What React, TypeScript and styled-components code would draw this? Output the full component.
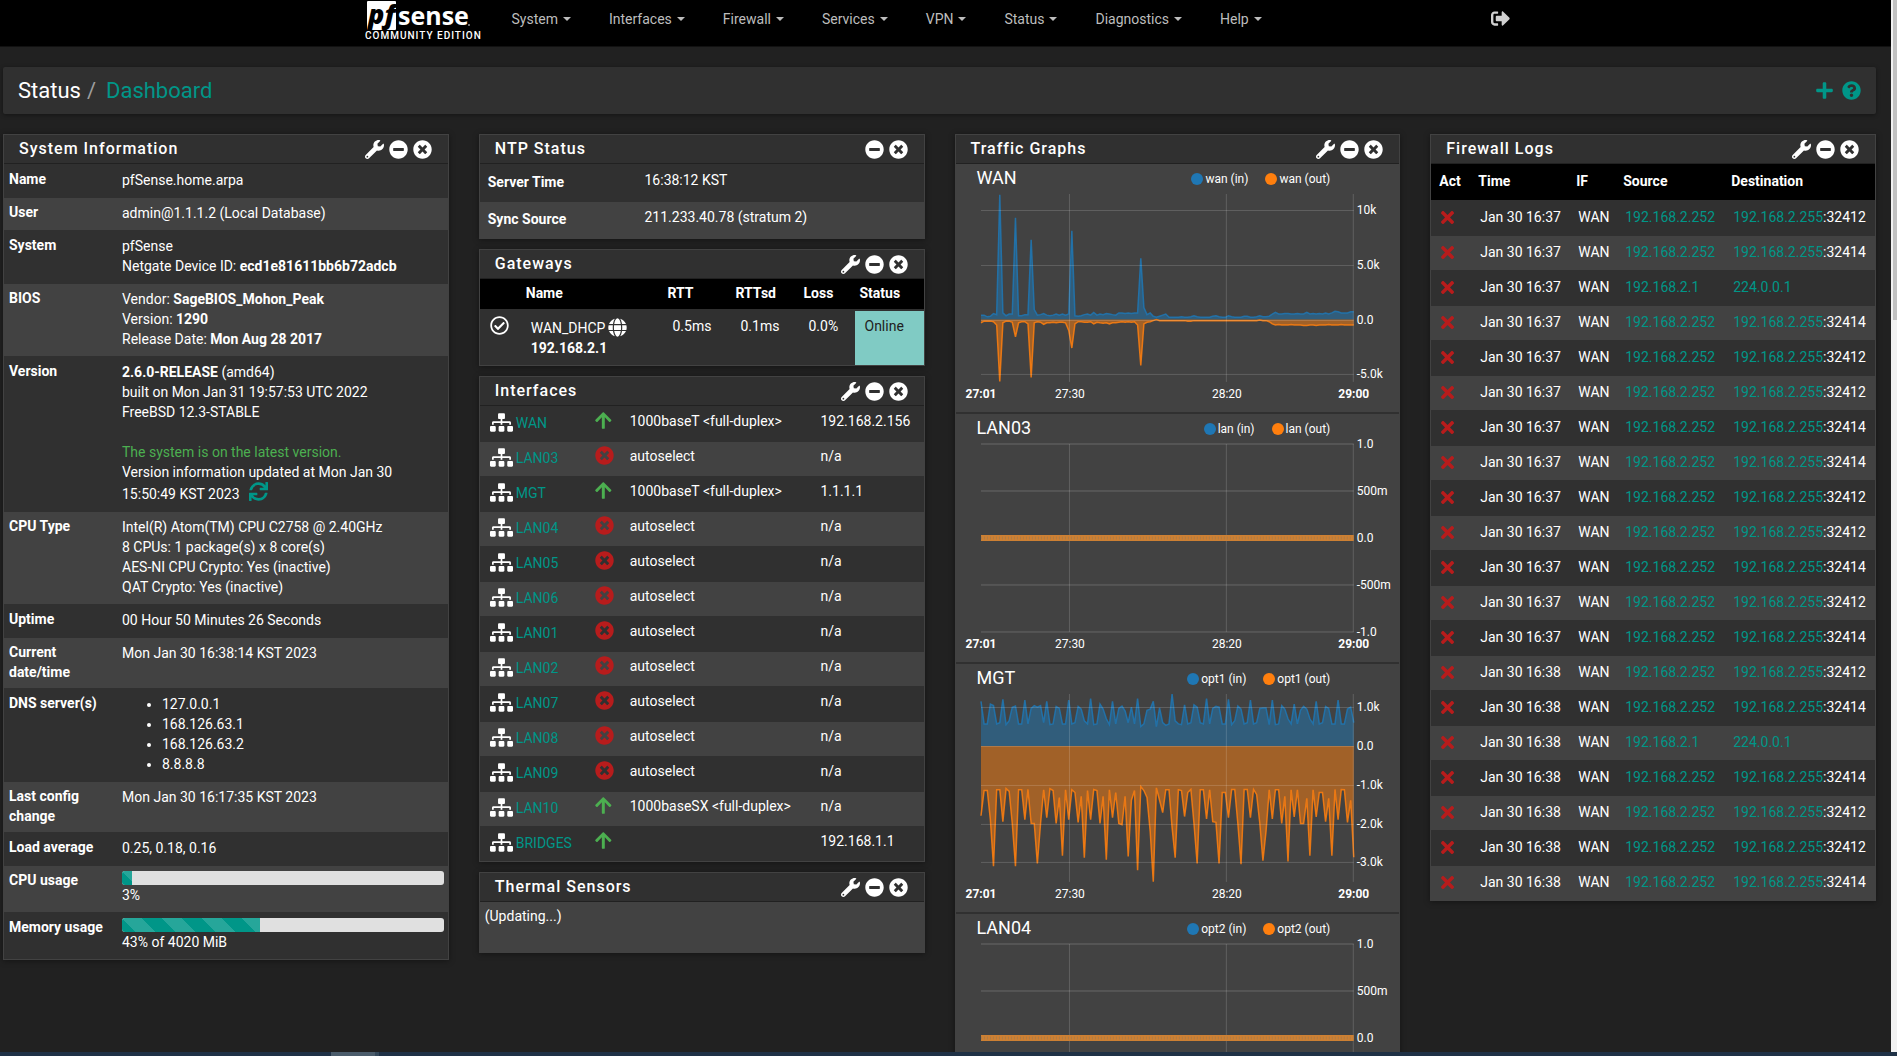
import React from "react";
import styled, { createGlobalStyle } from "styled-components";
import {
  FaArrowUp,
  FaGlobe,
  FaMinusCircle,
  FaPlus,
  FaQuestionCircle,
  FaRegCheckCircle,
  FaSignOutAlt,
  FaSitemap,
  FaSync,
  FaTimes,
  FaTimesCircle,
  FaWrench,
} from "react-icons/fa";

const color = {
  page: "#212121",
  panel: "#303030",
  stripe: "#424242",
  teal: "#009688",
  green: "#4caf50",
  red: "#b71c1c",
  blue: "#1f77b4",
  orange: "#ff7f0e",
};

const GlobalStyle = createGlobalStyle`
  *, *::before, *::after { box-sizing: border-box; }
  body {
    margin: 0;
    background: ${color.page};
    color: #fff;
    font: 14px/20px Roboto, "Liberation Sans", sans-serif;
  }
  button {
    padding: 0;
    border: 0;
    background: none;
    color: inherit;
    font: inherit;
    cursor: pointer;
  }
  a { color: ${color.teal}; text-decoration: none; }
  svg { display: block; flex: none; }
`;

/* ---------- frame ---------- */

const Shell = styled.div`
  display: grid;
  grid-template-columns: minmax(0, 1fr) 6px;
  grid-template-rows: minmax(0, 1fr) 4px;
  height: 100vh;
  overflow: hidden;
`;

const Viewport = styled.div`
  overflow: hidden;
`;

const ScrollTrack = styled.div`
  padding-left: 2px;
  background: #f1f1f1;
`;

const ScrollThumb = styled.div`
  height: 320px;
  background: #c1c1c1;
`;

const Taskbar = styled.div`
  grid-column: 1 / -1;
  display: grid;
  grid-template-columns: 331px 44px 4px 1fr;
  background: #1f3146;
`;

const TaskItem = styled.span<{ $dim?: boolean }>`
  grid-column: ${(p) => (p.$dim ? 3 : 2)};
  background: ${(p) => (p.$dim ? "#34485a" : "#4b5c6b")};
`;

/* ---------- navigation bar ---------- */

const Navbar = styled.header`
  height: 47px;
  background: #000;
  border-bottom: 1px solid #111;
`;

const NavInner = styled.div`
  display: flex;
  align-items: flex-start;
  max-width: 1170px;
  margin: 0 auto;
  padding: 0 21px 0 4px;
`;

const NavList = styled.ul`
  display: flex;
  flex: 1;
  margin: 0 0 0 10px;
  padding: 0;
  list-style: none;
`;

const NavButton = styled.button`
  display: flex;
  align-items: center;
  gap: 5px;
  padding: 9px 19px;
  color: #bdbdbd;
`;

const Caret = styled.span`
  border-top: 4px solid currentColor;
  border-right: 4px solid transparent;
  border-left: 4px solid transparent;
`;

const LogoutButton = styled.button`
  padding-top: 9px;
  color: #d0d0d0;
`;

const navItems = ["System", "Interfaces", "Firewall", "Services", "VPN", "Status", "Diagnostics", "Help"];

function Logo() {
  return (
    <svg width="118" height="46" viewBox="0 0 118 46" role="img" aria-label="pfSense Community Edition">
      <rect x="2" y="1" width="29" height="29" rx="1" fill="#fff" />
      <text x="3" y="24" fontFamily="'Open Sans', sans-serif" fontSize="27" fontWeight="800" fontStyle="italic" fill="#000">
        pf
      </text>
      <text x="33" y="25" fontFamily="'Open Sans', sans-serif" fontSize="25" fontWeight="700" fill="#fff">
        sense
      </text>
      <circle cx="104" cy="25" r="1" fill="#999" />
      <text x="0" y="39" fontFamily="Roboto, sans-serif" fontSize="10" fontWeight="500" letterSpacing="1" fill="#fff">
        COMMUNITY EDITION
      </text>
    </svg>
  );
}

/* ---------- page heading ---------- */

const Page = styled.main`
  padding: 20px 15px 20px 3px;
`;

const TitleBar = styled.div`
  display: flex;
  align-items: center;
  justify-content: space-between;
  height: 47px;
  margin-bottom: 20px;
  padding: 0 15px;
  background: ${color.panel};
  border-radius: 2px;
  box-shadow: 0 1px 4px rgba(0, 0, 0, 0.4);
`;

const Crumbs = styled.h1`
  display: flex;
  gap: 6px;
  margin: 0;
  font-size: 22px;
  font-weight: 400;
  line-height: 24px;
`;

const Slash = styled.span`
  margin-right: 4px;
  color: #9e9e9e;
`;

const TitleActions = styled.div`
  display: flex;
  gap: 8px;
  color: ${color.teal};
`;

/* ---------- widgets ---------- */

const Columns = styled.div`
  display: grid;
  grid-template-columns: repeat(4, minmax(0, 1fr));
  align-items: start;
  gap: 30px;
`;

const Column = styled.div`
  display: grid;
  gap: 10px;
`;

const Panel = styled.section`
  background: ${color.stripe};
  border: 1px solid ${color.stripe};
  box-shadow: 0 1px 6px rgba(0, 0, 0, 0.4);
`;

const PanelHead = styled.div`
  display: flex;
  align-items: center;
  justify-content: space-between;
  height: 29px;
  padding: 0 16px 0 15px;
  background: ${color.panel};
  border-bottom: 1px solid #212121;
`;

const PanelTitle = styled.h2`
  margin: 0;
  font-size: 16px;
  font-weight: 500;
  letter-spacing: 1px;
`;

const PanelTools = styled.div`
  display: flex;
  gap: 5px;
`;

function Widget(props: { title: string; settings?: boolean; children: React.ReactNode }) {
  const { title, settings = true, children } = props;
  return (
    <Panel>
      <PanelHead>
        <PanelTitle>{title}</PanelTitle>
        <PanelTools>
          {settings && (
            <button aria-label={`Configure ${title}`}>
              <FaWrench size={19} />
            </button>
          )}
          <button aria-label={`Collapse ${title}`}>
            <FaMinusCircle size={19} />
          </button>
          <button aria-label={`Close ${title}`}>
            <FaTimesCircle size={19} />
          </button>
        </PanelTools>
      </PanelHead>
      {children}
    </Panel>
  );
}

const Table = styled.table`
  width: 100%;
  table-layout: fixed;
  border-spacing: 0;

  th, td {
    padding: 0;
    text-align: left;
    vertical-align: top;
  }
  tbody th, tbody td { border-top: 1px solid ${color.panel}; }
  tbody tr { background: ${color.panel}; }
  tbody tr:nth-child(even) { background: ${color.stripe}; }
  thead { background: #000; }
`;

const InfoTable = styled(Table)`
  tbody th { width: 113px; padding: 4px 5px 6px; }
  tbody td { padding: 5px 4px 7px 5px; }
`;

const NtpTable = styled(Table)`
  tbody th { width: 36%; padding: 7px 8px 9px; }
  tbody td { padding: 5px; }
`;

const GatewayTable = styled(Table)`
  thead th { padding: 4px 5px 6px; }
  tbody td { padding: 5px 10px 7px; border-top-width: 2px; }
`;

const InterfaceTable = styled(Table)`
  tbody td { padding: 4px 10px 8px; }
`;

const LogTable = styled(Table)`
  white-space: nowrap;
  thead th { padding: 7px 8px 9px; }
  tbody td { padding: 6px 10px 8px; }
`;

const Plain = styled.ul`
  margin: 0;
  padding-left: 40px;
`;

const Latest = styled.span`
  color: ${color.green};
`;

const RefreshButton = styled.button`
  margin-left: 6px;
  color: ${color.teal};
  vertical-align: -2px;
`;

const Meter = styled.div`
  height: 14px;
  overflow: hidden;
  background: #e0e0e0;
  border-radius: 3px;
`;

const MeterFill = styled.div`
  height: 100%;
  background-color: ${color.teal};
  background-image: linear-gradient(
    45deg,
    rgba(255, 255, 255, 0.15) 25%,
    transparent 25%,
    transparent 50%,
    rgba(255, 255, 255, 0.15) 50%,
    rgba(255, 255, 255, 0.15) 75%,
    transparent 75%,
    transparent
  );
  background-size: 40px 40px;
`;

function Usage({ percent, text }: { percent: number; text: string }) {
  return (
    <>
      <Meter role="progressbar" aria-valuenow={percent} aria-valuemin={0} aria-valuemax={100}>
        <MeterFill style={{ width: `${percent}%` }} />
      </Meter>
      {text}
    </>
  );
}

const infoRows: [string, React.ReactNode][] = [
  ["Name", "pfSense.home.arpa"],
  ["User", "admin@1.1.1.2 (Local Database)"],
  ["System", <>pfSense<br />Netgate Device ID: <b>ecd1e81611bb6b72adcb</b></>],
  ["BIOS", <>Vendor: <b>SageBIOS_Mohon_Peak</b><br />Version: <b>1290</b><br />Release Date: <b>Mon Aug 28 2017</b></>],
  [
    "Version",
    <>
      <b>2.6.0-RELEASE</b> (amd64)<br />
      built on Mon Jan 31 19:57:53 UTC 2022<br />
      FreeBSD 12.3-STABLE<br />
      <br />
      <Latest>The system is on the latest version.</Latest><br />
      Version information updated at Mon Jan 30 15:50:49 KST 2023{" "}
      <RefreshButton aria-label="Refresh version information">
        <FaSync size={19} />
      </RefreshButton>
    </>,
  ],
  [
    "CPU Type",
    <>
      Intel(R) Atom(TM) CPU C2758 @ 2.40GHz<br />
      8 CPUs: 1 package(s) x 8 core(s)<br />
      AES-NI CPU Crypto: Yes (inactive)<br />
      QAT Crypto: Yes (inactive)
    </>,
  ],
  ["Uptime", "00 Hour 50 Minutes 26 Seconds"],
  ["Current date/time", "Mon Jan 30 16:38:14 KST 2023"],
  ["DNS server(s)", <Plain><li>127.0.0.1</li><li>168.126.63.1</li><li>168.126.63.2</li><li>8.8.8.8</li></Plain>],
  ["Last config change", "Mon Jan 30 16:17:35 KST 2023"],
  ["Load average", "0.25, 0.18, 0.16"],
  ["CPU usage", <Usage percent={3} text="3%" />],
  ["Memory usage", <Usage percent={43} text="43% of 4020 MiB" />],
];

const IconLine = styled.div`
  display: flex;
  align-items: center;
  gap: 3px;
  height: 22px;
  line-height: 22px;
  padding-top: 1px;
`;

const Online = styled.td`
  background: #80cbc4;
  color: #212121;
`;

const StateIcon = styled.span<{ $up: boolean }>`
  display: block;
  color: ${(p) => (p.$up ? color.green : color.red)};
`;

const full = "1000baseT <full-duplex>";
const interfaces: [string, boolean, string, string][] = [
  ["WAN", true, full, "192.168.2.156"],
  ["LAN03", false, "autoselect", "n/a"],
  ["MGT", true, full, "1.1.1.1"],
  ["LAN04", false, "autoselect", "n/a"],
  ["LAN05", false, "autoselect", "n/a"],
  ["LAN06", false, "autoselect", "n/a"],
  ["LAN01", false, "autoselect", "n/a"],
  ["LAN02", false, "autoselect", "n/a"],
  ["LAN07", false, "autoselect", "n/a"],
  ["LAN08", false, "autoselect", "n/a"],
  ["LAN09", false, "autoselect", "n/a"],
  ["LAN10", true, "1000baseSX <full-duplex>", "n/a"],
  ["BRIDGES", true, "", "192.168.1.1"],
];

const Note = styled.p`
  margin: 0;
  padding: 4px 5px 26px;
`;

/* ---------- traffic graphs ---------- */

const Graph = styled.div`
  height: 250px;
  border-bottom: 2px solid ${color.panel};
`;

const GraphHead = styled.div`
  display: flex;
  align-items: center;
  height: 30px;
  padding: 0 69px 0 21px;
`;

const GraphTitle = styled.h3`
  flex: 1;
  margin: 0 0 2px;
  font-size: 18px;
  font-weight: 400;
`;

const LegendItem = styled.span`
  display: flex;
  align-items: center;
  gap: 2px;
  margin-left: 17px;
  font-size: 12px;

  &::before {
    width: 12px;
    height: 12px;
    border-radius: 50%;
    background: currentColor;
    content: "";
  }
`;

const LegendText = styled.span`
  color: #fff;
`;

const Plot = styled.svg`
  width: 100%;
  height: auto;
  overflow: visible;

  text {
    fill: #fff;
    font-size: 12px;
  }
`;

const wanIn = [
  0.4, 0.4, 0.25, 0.3, 0.55, 0.45, 11.4, 0.6, 0.35, 0.5, 0.5, 9.3, 0.35, 0.35, 0.45, 0.45, 7.3, 0.9, 0.4, 0.45, 0.55,
  0.4, 0.35, 0.4, 0.5, 0.4, 0.5, 0.4, 0.5, 8.1, 0.35, 0.3, 0.35, 0.45, 0.5, 0.4, 0.65, 0.4, 0.5, 0.45, 0.55, 0.5, 0.45,
  0.4, 0.6, 0.6, 0.55, 0.6, 0.55, 0.6, 0.6, 5.6, 1.1, 0.45, 0.6, 0.3, 0.2, 0.3, 0.4, 0.5, 0.2, 0.2, 0.2, 0.2, 0.25,
  0.2, 0.2, 0.25, 0.35, 0.25, 0.2, 0.2, 0.2, 0.2, 0.3, 0.35, 0.25, 0.2, 0.2, 0.35, 0.25, 0.2, 0.2, 0.2, 0.3, 0.3, 0.2,
  0.2, 0.25, 0.35, 0.25, 0.25, 0.3, 0.5, 0.65, 0.5, 0.5, 0.55, 0.55, 0.5, 0.5, 0.55, 0.5, 0.5, 0.65, 0.5, 0.55, 0.5,
  0.55, 0.5, 0.6, 0.5, 0.6, 0.75, 0.7, 0.6, 0.6, 0.6, 0.7, 0.7,
];

const wanOut = [
  0.3, 0.15, 0.15, 0.15, 0.2, 0.5, 5.65, 0.3, 0.15, 0.15, 0.25, 1.57, 0.3, 0.2, 0.2, 0.4, 5.3, 0.3, 0.2, 0.25, 0.45,
  0.3, 0.3, 0.25, 0.3, 0.25, 0.25, 0.3, 1, 2.6, 0.4, 0.2, 0.2, 0.25, 0.25, 0.2, 0.4, 0.25, 0.3, 0.35, 0.3, 0.4, 0.3,
  0.3, 0.25, 0.2, 0.25, 0.2, 0.25, 0.2, 0.5, 4.2, 0.4, 0.25, 0.2, 0.1, 0, 0.1, 0.1, 0.1, 0.1, 0.1, 0.1, 0.1, 0.1, 0.1,
  0.15, 0.15, 0.1, 0.1, 0.1, 0.1, 0.1, 0.1, 0.1, 0.1, 0.1, 0.1, 0.1, 0.1, 0.1, 0.1, 0.1, 0.1, 0.1, 0.1, 0.1, 0.1, 0.1,
  0.05, 0.1, 0.1, 0.2, 0.4, 0.5, 0.45, 0.5, 0.5, 0.5, 0.45, 0.5, 0.5, 0.5, 0.55, 0.55, 0.5, 0.5, 0.55, 0.5, 0.5, 0.5,
  0.45, 0.5, 0.5, 0.5, 0.45, 0.5, 0.5, 0.5, 0.5,
];

const mgtIn = [
  1.15, 0.57, 0.57, 1.08, 1.04, 0.57, 0.6, 1.2, 0.55, 0.65, 1, 1.03, 0.57, 0.57, 1.18, 0.57, 0.97, 1.04, 1, 1.04, 0.6,
  1.15, 0.55, 0.57, 1.02, 0.97, 0.57, 0.57, 1.18, 0.57, 0.6, 1.02, 0.95, 0.65, 0.57, 1.22, 0.55, 0.57, 1.08, 0.95, 0.7,
  0.55, 1.15, 0.57, 0.97, 1.03, 0.9, 0.6, 1, 0.57, 1.22, 0.5, 0.57, 0.92, 0.95, 1.15, 0.5, 0.98, 0.6, 0.53, 0.57, 1.34,
  0.65, 0.57, 0.55, 1.06, 0.57, 0.6, 1.06, 1, 0.6, 0.57, 1.22, 0.57, 0.97, 1.02, 1, 0.57, 0.57, 1.2, 0.55, 0.65, 1.03,
  0.95, 0.57, 0.6, 1.18, 0.57, 0.6, 0.97, 0.98, 0.98, 0.55, 1.18, 0.55, 0.57, 1.04, 0.95, 0.7, 0.57, 1.08, 0.57, 0.92,
  1.02, 0.95, 0.7, 0.57, 1.15, 0.57, 0.6, 1.02, 0.97, 0.57, 0.57, 1.18, 0.57, 0.57, 0.95, 1, 0.6,
];

const mgtOut = [
  1.8, 1.15, 1.15, 1.9, 3.1, 1.13, 1.13, 1.95, 1.1, 1.17, 2, 3.1, 1.13, 1.13, 1.9, 1.12, 2, 2, 3.03, 2, 1.13, 1.85, 1.1,
  1.15, 2, 1.33, 2.83, 1.13, 1.9, 1.13, 1.2, 1.97, 1.3, 2.88, 1.15, 1.9, 1.12, 1.15, 2, 1.3, 2.93, 1.13, 1.85, 1.2, 2,
  2.03, 1.3, 2.85, 1.4, 1.15, 3.2, 1.05, 1.15, 1.33, 2.2, 3.5, 1.08, 1.4, 1.72, 1.13, 1.13, 2.1, 2.88, 1.13, 1.15, 1.82,
  1.2, 1.12, 2, 3.03, 1.13, 1.13, 1.88, 1.13, 1.95, 1.97, 3.03, 1.2, 1.2, 1.85, 1.12, 1.12, 2, 3.05, 1.12, 1.12, 1.85,
  1.12, 1.25, 2, 2.96, 2.2, 1.13, 1.88, 1.13, 1.13, 2, 1.3, 2.98, 1.13, 1.83, 1.13, 2, 2, 1.35, 2.83, 1.13, 1.83, 1.2,
  1.2, 1.95, 1.35, 2.83, 1.12, 1.9, 1.12, 1.13, 1.97, 1.4, 2.87,
];

type Axis = { zero: number; unit: number; ticks: [number, string][] };

const idleAxis: Axis = {
  zero: 94,
  unit: 94,
  ticks: [[1, "1.0"], [0.5, "500m"], [0, "0.0"], [-0.5, "-500m"], [-1, "-1.0"]],
};

const graphs: { title: string; id: string; axis: Axis; up?: number[]; down?: number[] }[] = [
  {
    title: "WAN",
    id: "wan",
    axis: { zero: 125.6, unit: 10.95, ticks: [[10, "10k"], [5, "5.0k"], [0, "0.0"], [-5, "-5.0k"]] },
    up: wanIn,
    down: wanOut,
  },
  { title: "LAN03", id: "lan", axis: idleAxis },
  {
    title: "MGT",
    id: "opt1",
    axis: {
      zero: 52,
      unit: 38.8,
      ticks: [[1, "1.0k"], [0, "0.0"], [-1, "-1.0k"], [-2, "-2.0k"], [-3, "-3.0k"]],
    },
    up: mgtIn,
    down: mgtOut,
  },
  { title: "LAN04", id: "opt2", axis: idleAxis },
];

const LEFT = 25;
const RIGHT = 398;

function linePoints(values: number[], axis: Axis, sign: number) {
  const step = (RIGHT - LEFT) / (values.length - 1);
  return values.map((v, i) => `${(LEFT + i * step).toFixed(1)},${(axis.zero - sign * v * axis.unit).toFixed(1)}`).join(" ");
}

function Series({ values, axis, sign, fill }: { values: number[]; axis: Axis; sign: number; fill: string }) {
  const pts = linePoints(values, axis, sign);
  return (
    <>
      <polygon points={`${LEFT},${axis.zero} ${pts} ${RIGHT},${axis.zero}`} fill={fill} fillOpacity="0.5" />
      <polyline points={pts} fill="none" stroke={fill} strokeOpacity="0.85" strokeWidth="1.5" />
    </>
  );
}

function TrafficGraph({ title, id, axis, up, down }: (typeof graphs)[number]) {
  const gridWidth = up ? 1 : 2;
  return (
    <Graph>
      <GraphHead>
        <GraphTitle>{title}</GraphTitle>
        <LegendItem style={{ color: color.blue }}>
          <LegendText>{id} (in)</LegendText>
        </LegendItem>
        <LegendItem style={{ color: color.orange }}>
          <LegendText>{id} (out)</LegendText>
        </LegendItem>
      </GraphHead>
      <Plot viewBox="0 0 444 218">
        {up && <Series values={up} axis={axis} sign={1} fill={color.blue} />}
        {down && <Series values={down} axis={axis} sign={-1} fill={color.orange} />}
        {axis.ticks.map(([value, label]) => (
          <g key={label}>
            <rect
              x={LEFT}
              y={Math.round(axis.zero - value * axis.unit) - (up ? 0 : 1)}
              width={RIGHT - LEFT}
              height={gridWidth}
              fill="#fff"
              fillOpacity={up ? 0.16 : 0.1}
            />
            <text x={RIGHT + 3} y={Math.round(axis.zero - value * axis.unit) + 4}>
              {label}
            </text>
          </g>
        ))}
        {[114, 271, RIGHT].map((x) => (
          <rect key={x} x={x - 1} y="0" width="1" height="188" fill="#fff" fillOpacity="0.16" />
        ))}
        {!up && (
          <>
            <line x1={LEFT} x2={RIGHT} y1="94" y2="94" stroke="#cd8033" strokeWidth="6" />
            <line x1={LEFT} x2={RIGHT} y1="94" y2="94" stroke="#b07c45" strokeWidth="3" strokeDasharray="1 2" />
          </>
        )}
        <text x={LEFT} y="204" textAnchor="middle" fontWeight="700">27:01</text>
        <text x="114" y="204" textAnchor="middle">27:30</text>
        <text x="271" y="204" textAnchor="middle">28:20</text>
        <text x={RIGHT} y="204" textAnchor="middle" fontWeight="700">29:00</text>
      </Plot>
    </Graph>
  );
}

/* ---------- firewall log ---------- */

const BlockButton = styled.button`
  display: flex;
  align-items: center;
  height: 20px;
  color: ${color.red};
`;

const broadcast = "192.168.2.255";
const firewallLog = [
  "32412", "32414", "", "32414", "32412", "32412", "32414", "32414", "32412", "32412",
  "32414", "32412", "32414", "32412", "32414", "", "32414", "32412", "32412", "32414",
].map((port, i) => ({
  time: i < 13 ? "Jan 30 16:37" : "Jan 30 16:38",
  source: port ? "192.168.2.252" : "192.168.2.1",
  target: port ? broadcast : "224.0.0.1",
  port,
}));

export default function App() {
  return (
    <Shell>
      <GlobalStyle />
      <Viewport>
        <Navbar>
          <NavInner>
            <a href="#dashboard">
              <Logo />
            </a>
            <NavList>
              {navItems.map((item) => (
                <li key={item}>
                  <NavButton>
                    {item}
                    <Caret />
                  </NavButton>
                </li>
              ))}
            </NavList>
            <LogoutButton aria-label="Log out">
              <FaSignOutAlt size={19} />
            </LogoutButton>
          </NavInner>
        </Navbar>

        <Page>
          <TitleBar>
            <Crumbs>
              Status <Slash>/</Slash> <a href="#dashboard">Dashboard</a>
            </Crumbs>
            <TitleActions>
              <button aria-label="Add widget">
                <FaPlus size={19} />
              </button>
              <button aria-label="Help">
                <FaQuestionCircle size={19} />
              </button>
            </TitleActions>
          </TitleBar>

          <Columns>
            <Column>
              <Widget title="System Information">
                <InfoTable>
                  <tbody>
                    {infoRows.map(([label, value]) => (
                      <tr key={label}>
                        <th scope="row">{label}</th>
                        <td>{value}</td>
                      </tr>
                    ))}
                  </tbody>
                </InfoTable>
              </Widget>
            </Column>

            <Column>
              <Widget title="NTP Status" settings={false}>
                <NtpTable>
                  <tbody>
                    <tr>
                      <th scope="row">Server Time</th>
                      <td>16:38:12 KST</td>
                    </tr>
                    <tr>
                      <th scope="row">Sync Source</th>
                      <td>211.233.40.78 (stratum 2)</td>
                    </tr>
                  </tbody>
                </NtpTable>
              </Widget>

              <Widget title="Gateways">
                <GatewayTable>
                  <colgroup>
                    <col style={{ width: 41 }} />
                    <col />
                    <col style={{ width: 68 }} />
                    <col style={{ width: 68 }} />
                    <col style={{ width: 56 }} />
                    <col style={{ width: 69 }} />
                  </colgroup>
                  <thead>
                    <tr>
                      <th />
                      <th>Name</th>
                      <th>RTT</th>
                      <th>RTTsd</th>
                      <th>Loss</th>
                      <th>Status</th>
                    </tr>
                  </thead>
                  <tbody>
                    <tr>
                      <td>
                        <FaRegCheckCircle size={19} />
                      </td>
                      <td>
                        <IconLine>
                          WAN_DHCP <FaGlobe size={19} />
                        </IconLine>
                        <b>192.168.2.1</b>
                      </td>
                      <td>0.5ms</td>
                      <td>0.1ms</td>
                      <td>0.0%</td>
                      <Online>Online</Online>
                    </tr>
                  </tbody>
                </GatewayTable>
              </Widget>

              <Widget title="Interfaces">
                <InterfaceTable>
                  <colgroup>
                    <col style={{ width: 105 }} />
                    <col style={{ width: 35 }} />
                    <col />
                    <col style={{ width: 113 }} />
                  </colgroup>
                  <tbody>
                    {interfaces.map(([name, up, media, address]) => (
                      <tr key={name}>
                        <td>
                          <IconLine>
                            <FaSitemap size={23} />
                            <a href={`#${name}`}>{name}</a>
                          </IconLine>
                        </td>
                        <td>
                          <StateIcon $up={up}>
                            {up ? <FaArrowUp size={19} preserveAspectRatio="xMinYMid" /> : <FaTimesCircle size={19} />}
                          </StateIcon>
                        </td>
                        <td>{media}</td>
                        <td>{address}</td>
                      </tr>
                    ))}
                  </tbody>
                </InterfaceTable>
              </Widget>

              <Widget title="Thermal Sensors">
                <Note>(Updating...)</Note>
              </Widget>
            </Column>

            <Column>
              <Widget title="Traffic Graphs">
                {graphs.map((g) => (
                  <TrafficGraph key={g.id} {...g} />
                ))}
              </Widget>
            </Column>

            <Column>
              <Widget title="Firewall Logs">
                <LogTable>
                  <colgroup>
                    <col style={{ width: 39 }} />
                    <col style={{ width: 98 }} />
                    <col style={{ width: 47 }} />
                    <col style={{ width: 108 }} />
                    <col />
                  </colgroup>
                  <thead>
                    <tr>
                      <th>Act</th>
                      <th>Time</th>
                      <th>IF</th>
                      <th>Source</th>
                      <th>Destination</th>
                    </tr>
                  </thead>
                  <tbody>
                    {firewallLog.map((entry, i) => (
                      <tr key={i}>
                        <td>
                          <BlockButton aria-label="Blocked">
                            <FaTimes size={19} preserveAspectRatio="xMinYMid" />
                          </BlockButton>
                        </td>
                        <td>{entry.time}</td>
                        <td>WAN</td>
                        <td>
                          <a href="#source">{entry.source}</a>
                        </td>
                        <td>
                          <a href="#destination">{entry.target}</a>
                          {entry.port && `:${entry.port}`}
                        </td>
                      </tr>
                    ))}
                  </tbody>
                </LogTable>
              </Widget>
            </Column>
          </Columns>
        </Page>
      </Viewport>
      <ScrollTrack>
        <ScrollThumb />
      </ScrollTrack>
      <Taskbar>
        <TaskItem />
        <TaskItem $dim />
      </Taskbar>
    </Shell>
  );
}
